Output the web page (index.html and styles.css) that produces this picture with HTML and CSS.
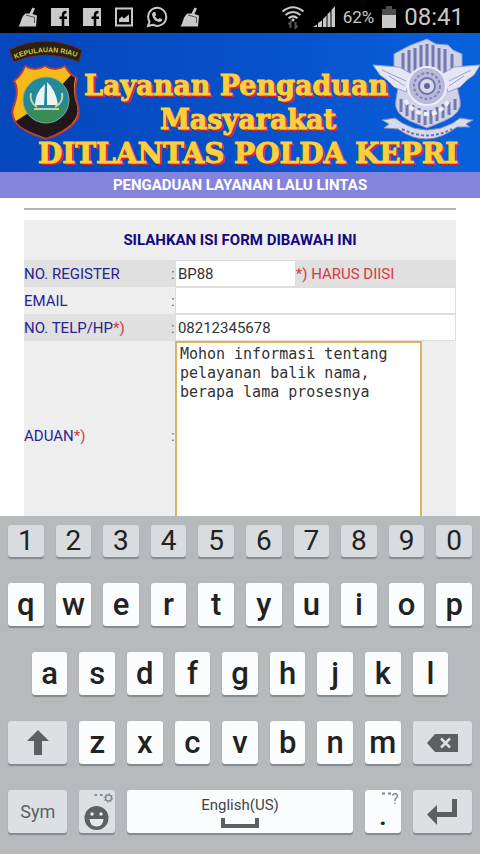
FILE: index.html
```
<!DOCTYPE html>
<html lang="id">
  <head>
    <meta charset="UTF-8" />
    <meta name="viewport" content="width=device-width, initial-scale=1.0" />
    <title>Layanan Pengaduan Masyarakat</title>
    <link rel="stylesheet" href="styles.css">
  </head>
  <body>
    <svg class="defs" width="0" height="0" aria-hidden="true">
      <symbol id="broom" viewBox="0 0 20 20">
        <path d="M14.500 0.500L17 1.500L14.500 7L19 8.500L18 19.500H0.500C3 17 2.500 10 7.500 6.500L11.500 6.500Z" fill="#c9c9c5" />
        <path d="M8 8L17 10.500M16.500 11V16" stroke="#555" stroke-width="1" fill="none" />
      </symbol>
      <symbol id="facebook" viewBox="0 0 20 20">
        <path d="M1 1H19V19H1Z" fill="#c9c9c5" />
        <path d="M13 19V8Q13 5 16.500 5M9.500 10.800H17" stroke="#000" stroke-width="2.500" fill="none" />
      </symbol>
    </svg>

    <header class="status">
      <div class="status-left">
        <svg width="20" height="20"><use href="#broom" /></svg>
        <svg width="20" height="20"><use href="#facebook" /></svg>
        <svg width="20" height="20"><use href="#facebook" /></svg>
        <svg width="20" height="20" viewBox="0 0 20 20">
          <path d="M2 1.500H18V18.500H2Z" fill="none" stroke="#c9c9c5" stroke-width="2" />
          <path d="M5 15V12L8 9.500L10 11.500L15 7.500V15Z" fill="#c9c9c5" />
        </svg>
        <svg width="22" height="22" viewBox="0 0 22 22">
          <path d="M2 20L3.500 15.500A9 9 0 1 1 6.800 18.700Z" fill="none" stroke="#c9c9c5" stroke-width="2" />
          <path d="M7.500 6L9.200 6L10.200 8.800L9 10.200Q10.300 12.500 12.300 13.300L13.600 12L16.200 13.300Q16 16 13.500 16Q7 15 6 8.500Q6.300 6.500 7.500 6Z" fill="#c9c9c5" />
        </svg>
        <svg width="20" height="20"><use href="#broom" /></svg>
      </div>
      <div class="status-right">
        <svg width="24" height="24" viewBox="0 0 24 24" fill="none" stroke="#c9c9c5" stroke-width="2">
          <path d="M1.500 6.500Q12 -2 22.500 6.500M4.500 10Q12 4 19.500 10M7.500 13.200Q12 9.500 16.500 13.200" />
          <circle cx="12" cy="15" r="1.500" fill="#c9c9c5" stroke="none" />
          <path d="M9.500 23V17L7.500 19.500M14.500 17V23L16.500 20.500" stroke="#555" />
        </svg>
        <svg width="22" height="22" viewBox="0 0 22 22" fill="#c9c9c5">
          <path d="M0 21L4 18.500V21ZM5 17L9 14.500V21H5ZM10 13L13.500 9.500V21H10ZM14.500 8L17.500 5.500V21H14.500ZM18.500 4L22 0V21H18.500Z" />
        </svg>
        <span class="percent">62%</span>
        <svg width="14" height="22" viewBox="0 0 14 22">
          <path d="M4 0H10V3H14V9H0V3H4Z" fill="#4d4d4d" />
          <path d="M0 9H14V22H0Z" fill="#c9c9c5" />
        </svg>
        <span class="clock">08:41</span>
      </div>
    </header>

    <main>
      <div class="banner">
        <svg class="logo-left" width="76" height="102" viewBox="0 0 76 102">
          <path d="M1 10Q37 -8 74 10L71 22Q37 8 6 22Z" fill="#2b2114" stroke="#6b2940" />
          <path id="arc" d="M7 19Q38 6 71 18" fill="none" />
          <text class="logo-text"><textPath href="#arc">KEPULAUAN RIAU</textPath></text>
          <path d="M17 26Q27 32 37 26Q47 32 57 26Q62 35 69 38Q65 52 70 66Q76 86 38 99Q0 88 5 68Q12 50 6 41Q13 36 17 26Z" fill="#f5b919" stroke="#b73648" stroke-width="2" />
          <path d="M67 38Q64 52 69 66Q74 85 38 98Q11 89 8 81Q39 63 63 35Z" fill="#21171b" />
          <circle cx="38" cy="60" r="23" fill="#23899b" stroke="#88ad70" />
          <path d="M18 65Q38 77 58 65Q54 80 38 82Q23 80 18 65Z" fill="#3a8c52" />
          <path d="M37 44Q27 53 27 65H36ZM39 42V65H50Q48 50 39 42Z" fill="#edf4f3" />
          <path d="M23 53Q21 62 29 67M54 53Q56 62 47 67M26 69H51" stroke="#c2d8a3" stroke-width="2" fill="none" />
        </svg>
        <svg class="logo-right" width="108" height="102" viewBox="0 0 108 102">
          <path d="M55 1L64 6L76 7L81 12L90 16V30L84 43L88 62Q91 75 72 83L55 90L38 83Q21 75 24 62L27 43L22 28V16L33 10L39 7Z" fill="#d0d2e8" stroke="#9298c9" />
          <path d="M31 15V37M37 12V36M43 10V34M49 7V32M55 6V30M61 7V32M67 10V34M73 11V36M80 16V36M29 61V74M35 63V78M41 67V82M47 70V85M53 72V87M59 72V86M65 69V83M71 66V80M77 64V77M83 61V72" stroke="#7279b2" stroke-width="3" />
          <path d="M1 27L27 29L40 36L34 54L22 49L15 42L8 37ZM108 27L82 29L70 36L76 54L88 49L95 42L102 37Z" fill="#e5e6f3" stroke="#9aa0cf" />
          <path d="M10 32L34 43M17 38L33 48M99 32L77 43M92 38L77 48" stroke="#9aa0cf" />
          <circle cx="55" cy="48" r="19" fill="#b7badb" stroke="#eeeef8" stroke-width="2" />
          <circle cx="55" cy="48" r="13" fill="none" stroke="#7e84b8" stroke-width="2" stroke-dasharray="3 2" />
          <circle cx="55" cy="48" r="8" fill="#d7d9ec" stroke="#6d73aa" stroke-width="2" />
          <circle cx="55" cy="48" r="3" fill="#6067a4" />
          <path d="M33 62Q42 76 55 76Q69 76 77 62" fill="none" stroke="#f0f0f8" stroke-width="4" stroke-dasharray="5 3" />
          <path d="M10 82L23 80L30 85Q55 99 81 85L88 80L101 82L94 86L98 89H85Q55 112 26 91L12 90L17 86Z" fill="#d7d9ec" stroke="#8489bd" />
          <path d="M30 91Q55 104 80 91" fill="none" stroke="#6c72aa" stroke-width="2" stroke-dasharray="3 2" />
        </svg>
        <h1>
          <span class="line-top">Layanan Pengaduan</span>
          <span>Masyarakat</span>
          <span class="line-big">DITLANTAS POLDA KEPRI</span>
        </h1>
      </div>
      <h2>PENGADUAN LAYANAN LALU LINTAS</h2>

      <form class="content">
        <hr />
        <table>
          <thead>
            <tr><th colspan="3">SILAHKAN ISI FORM DIBAWAH INI</th></tr>
          </thead>
          <tbody>
            <tr class="dark">
              <td class="name"><label for="register">NO. REGISTER</label></td>
              <td class="colon">:</td>
              <td><div class="field"><input class="short" type="text" id="register" name="register" value="BP88" /><span class="red">*) HARUS DIISI</span></div></td>
            </tr>
            <tr>
              <td class="name"><label for="email">EMAIL</label></td>
              <td class="colon">:</td>
              <td><div class="field"><input type="text" id="email" name="email" /></div></td>
            </tr>
            <tr class="dark">
              <td class="name"><label for="telp">NO. TELP/HP<span class="red">*)</span></label></td>
              <td class="colon">:</td>
              <td><div class="field"><input type="text" id="telp" name="telp" value="08212345678" /></div></td>
            </tr>
            <tr>
              <td class="name"><label for="aduan">ADUAN<span class="red">*)</span></label></td>
              <td class="colon">:</td>
              <td><textarea id="aduan" name="aduan" spellcheck="false">Mohon informasi tentang
pelayanan balik nama,
berapa lama prosesnya</textarea></td>
            </tr>
          </tbody>
        </table>
      </form>
    </main>

    <div class="keyboard">
      <div class="row numbers">
        <button>1</button><button>2</button><button>3</button><button>4</button><button>5</button>
        <button>6</button><button>7</button><button>8</button><button>9</button><button>0</button>
      </div>
      <div class="row">
        <button>q</button><button>w</button><button>e</button><button>r</button><button>t</button>
        <button>y</button><button>u</button><button>i</button><button>o</button><button>p</button>
      </div>
      <div class="row middle">
        <button>a</button><button>s</button><button>d</button><button>f</button><button>g</button>
        <button>h</button><button>j</button><button>k</button><button>l</button>
      </div>
      <div class="row">
        <button class="wide gray" aria-label="Shift">
          <svg width="22" height="25" viewBox="0 0 22 25"><path d="M11 0L22 11H15V25H7V11H0Z" fill="#5c6062" /></svg>
        </button>
        <button>z</button><button>x</button><button>c</button><button>v</button><button>b</button><button>n</button><button>m</button>
        <button class="wide gray" aria-label="Backspace">
          <svg width="31" height="18" viewBox="0 0 31 18">
            <path d="M0 9L8 0H31V18H8Z" fill="#5c6062" />
            <path d="M14 4.500L23 13.500M23 4.500L14 13.500" stroke="#dce0e2" stroke-width="2.500" />
          </svg>
        </button>
      </div>
      <div class="row">
        <button class="wide gray sym">Sym</button>
        <button class="gray" aria-label="Emoji">
          <svg width="36" height="42" viewBox="0 0 36 42">
            <circle cx="17.500" cy="27" r="12" fill="#5c6062" />
            <path d="M10.500 28H24.500Q24 35.500 17.500 35.500Q11 35.500 10.500 28Z" fill="#e6e9ea" />
            <circle cx="13" cy="23" r="1.800" fill="#e6e9ea" />
            <circle cx="22" cy="23" r="1.800" fill="#e6e9ea" />
            <path d="M15.500 4H18M21 4H23.500" stroke="#80888c" stroke-width="2" />
            <circle cx="29.500" cy="7" r="3" fill="none" stroke="#80888c" stroke-width="1.500" />
            <circle cx="29.500" cy="7" r="4.300" fill="none" stroke="#80888c" stroke-dasharray="1.500 1.800" />
          </svg>
        </button>
        <button class="space">
          English(US)
          <svg width="38" height="10" viewBox="0 0 38 10"><path d="M2 0V8H36V0" fill="none" stroke="#5c6062" stroke-width="4" /></svg>
        </button>
        <button class="dot">
          <span class="hint">
            <svg width="10" height="10" viewBox="0 0 10 10"><path d="M0 1.500H3M6 1.500H9" stroke="#80888c" stroke-width="2" /></svg>
            ?
          </span>
          <span class="period">.</span>
        </button>
        <button class="wide gray" aria-label="Enter">
          <svg width="30" height="26" viewBox="0 0 30 26"><path d="M25 0H30V18H10V26L0 15.500L10 6V13H25Z" fill="#5c6062" /></svg>
        </button>
      </div>
    </div>
  </body>
</html>
```
FILE: styles.css
```
* {
  box-sizing: border-box;
}

body {
  margin: 0;
  height: 100vh;
  display: flex;
  flex-direction: column;
  overflow: hidden;
  background-color: #fff;
  font-family: Roboto, "Liberation Sans", sans-serif;
}

svg {
  display: block;
  flex: none;
}

.defs {
  position: absolute;
}

.status {
  flex: none;
  height: 33px;
  padding: 0 16px 0 18px;
  display: flex;
  align-items: center;
  justify-content: space-between;
  background-color: #000;
  color: #c9c9c5;
}

.status-left {
  display: flex;
  align-items: center;
  gap: 12px;
}

.status-right {
  display: flex;
  align-items: center;
  gap: 8px;
}

.percent {
  font-size: 17px;
}

.clock {
  font-size: 24px;
}

main {
  flex: 1;
  min-height: 0;
  overflow: hidden;
}

.banner {
  position: relative;
  height: 139px;
  padding-top: 36px;
  background: linear-gradient(90deg, #0647bd, #0650c8 50%, #0861dc);
}

.logo-left {
  position: absolute;
  left: 8px;
  top: 7px;
}

.logo-right {
  position: absolute;
  right: 0;
  top: 5px;
}

.logo-text {
  font-family: "Liberation Sans", sans-serif;
  font-size: 7px;
  font-weight: bold;
  fill: #d5c544;
}

h1 {
  position: relative;
  margin: 0;
  padding-left: 16px;
  font-family: "DejaVu Serif", serif;
  font-size: 27px;
  line-height: 34px;
  color: #fbd03c;
  -webkit-text-stroke: 1px #fbd03c;
  text-shadow: 1px 1px 0 #e5322d, 2px 2px 0 #d81f2d;
  text-align: center;
  white-space: nowrap;
}

h1 span {
  display: block;
}

h1 .line-top {
  padding-right: 24px;
}

h1 .line-big {
  font-size: 28px;
}

h2 {
  margin: 0;
  background-color: #8584dc;
  color: #fff;
  font-size: 15px;
  font-weight: bold;
  line-height: 26px;
  text-align: center;
}

.content {
  padding: 10px 24px 0;
}

hr {
  margin: 0 0 10px;
  border: 0;
  border-top: 2px solid #b5b3b3;
}

table {
  width: 100%;
  border-collapse: collapse;
  background-color: #eee;
  color: #29238f;
  font-size: 15px;
}

th {
  height: 40px;
  padding: 0;
  color: #12097f;
}

td {
  padding: 0;
}

.dark {
  background-color: #e0e0e0;
}

.name {
  width: 34%;
}

.colon {
  width: 4px;
  color: #666;
}

.red {
  color: #d63a3f;
}

.field {
  display: flex;
  align-items: center;
}

input {
  flex: 1;
  min-width: 0;
  height: 27px;
  padding: 0 2px;
  border: 1px solid #ddd;
  background-color: #fff;
  color: #333;
  font-family: inherit;
  font-size: 15px;
}

.short {
  flex: none;
  width: 43%;
}

textarea {
  display: block;
  width: 88%;
  height: 190px;
  padding: 2px 3px;
  border: 2px solid #d9b65b;
  outline: none;
  resize: none;
  background-color: #fff;
  color: #333;
  font-family: "DejaVu Sans Mono", monospace;
  font-size: 15px;
  line-height: 19px;
}

.keyboard {
  flex: none;
  padding: 9px 8px 21px;
  display: flex;
  flex-direction: column;
  gap: 26px;
  background-color: #b6babd;
}

/* 20 half-key columns: a letter takes 2, shift and enter take 3 */
.row {
  display: grid;
  grid-template-columns: repeat(20, minmax(0, 1fr));
  column-gap: 12px;
}

.row button {
  grid-column: span 2;
  height: 43px;
  padding: 0;
  display: flex;
  align-items: center;
  justify-content: center;
  border: none;
  border-radius: 3px;
  background-color: #fbfcfd;
  box-shadow: 0 2px 1px #85898c;
  color: #222;
  font-family: inherit;
  font-size: 31px;
  font-weight: 500;
  line-height: 36px;
}

.row.numbers button {
  height: 32px;
  background-color: #d8dcde;
  font-size: 28px;
  font-weight: normal;
}

.row.middle button:first-child {
  grid-column: 2 / span 2;
}

.row .wide {
  grid-column: span 3;
}

.row .gray {
  background-color: #dce0e2;
}

.row .sym {
  color: #5c6062;
  font-size: 18px;
  font-weight: normal;
}

.row .space {
  grid-column: span 10;
  flex-direction: column;
  gap: 4px;
  color: #444;
  font-size: 15px;
  font-weight: normal;
  line-height: 18px;
}

.row .dot {
  flex-direction: column;
  justify-content: flex-start;
}

.hint {
  align-self: flex-end;
  display: flex;
  padding: 2px 2px 0 0;
  color: #80888c;
  font-size: 15px;
  font-weight: normal;
  line-height: 15px;
}

.period {
  font-size: 28px;
  line-height: 18px;
}
```
